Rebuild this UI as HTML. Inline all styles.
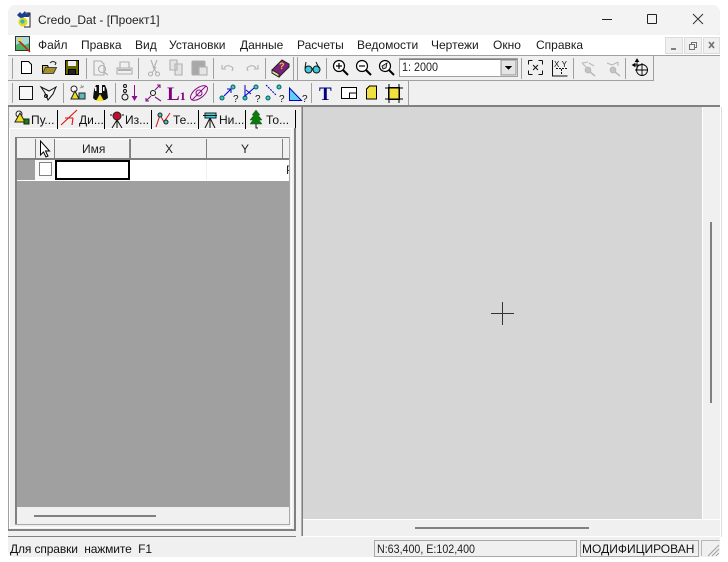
<!DOCTYPE html>
<html><head><meta charset="utf-8"><style>
*{box-sizing:border-box}
html,body{margin:0;padding:0;width:728px;height:562px;overflow:hidden;background:#fff}
svg{position:absolute;left:0;top:0}
text{font-family:"Liberation Sans",sans-serif;white-space:pre}
</style></head><body>
<svg width="728" height="562" viewBox="0 0 728 562" xmlns="http://www.w3.org/2000/svg" shape-rendering="crispEdges">
<!-- window -->
<rect x="8" y="5" width="712" height="552" rx="7" fill="#f0f0f0"/>
<rect x="8" y="5" width="712" height="30" rx="7" fill="#f3f3f3"/>
<rect x="8" y="35" width="712" height="20" fill="#fff"/>
<rect x="8" y="55" width="712" height="1" fill="#a0a0a0"/>
<!-- toolbars lines -->
<rect x="8" y="80" width="646" height="1" fill="#a0a0a0"/>
<rect x="408" y="81" width="1" height="24" fill="#a0a0a0"/>
<rect x="653" y="56" width="1" height="25" fill="#a0a0a0"/>
<rect x="8" y="105" width="712" height="2" fill="#808080"/>
<!-- separators -->
<g fill="#a0a0a0">
<rect x="12" y="58" width="1" height="21"/><rect x="86" y="58" width="1" height="21"/><rect x="138" y="58" width="1" height="21"/><rect x="213" y="58" width="1" height="21"/><rect x="265" y="58" width="1" height="21"/><rect x="293" y="57" width="1" height="23"/><rect x="297" y="57" width="1" height="23"/><rect x="326" y="58" width="1" height="21"/><rect x="521" y="58" width="1" height="21"/><rect x="573" y="58" width="1" height="21"/><rect x="625" y="58" width="1" height="21"/>
<rect x="12" y="83" width="1" height="20"/><rect x="63" y="83" width="1" height="20"/><rect x="115" y="83" width="1" height="20"/><rect x="213" y="83" width="1" height="20"/><rect x="311" y="83" width="1" height="20"/>
</g>
<!-- app icon -->
<g shape-rendering="auto">
<path d="M24 13h6v14h-6" fill="#fff" stroke="#222"/>
<path d="M17 15l3-3 2 2 3-3 1 3 4-1-1 4-5 0-2 2-3-2z" fill="#1c3f94"/>
<circle cx="23" cy="22" r="4.500" fill="#d8dc20"/>
<circle cx="22.500" cy="21.500" r="2" fill="#30b0c8"/>
</g>
<text x="38" y="24" font-size="12" fill="#222" shape-rendering="auto">Credo_Dat - [Проект1]</text>
<!-- window buttons -->
<rect x="602" y="19" width="10" height="1" fill="#222"/>
<rect x="647.5" y="14.5" width="9" height="9" rx="1" fill="none" stroke="#222"/>
<path d="M693 14l10 10M703 14l-10 10" stroke="#333" stroke-width="1" fill="none" shape-rendering="auto"/>
<!-- menu icon -->
<rect x="15.5" y="36.5" width="14" height="14" fill="#a8dcd8" stroke="#333"/>
<path d="M16 45l5-3 4 3 4-2v7H16z" fill="#50b060" shape-rendering="auto"/>
<path d="M18 40l12 12" stroke="#d01515" stroke-width="1.300" shape-rendering="auto"/>
<rect x="18" y="38" width="4" height="3" fill="#e0d850"/>
<!-- menu text -->
<g font-size="12" fill="#1a1a1a" shape-rendering="auto">
<text x="38" y="49">Файл</text><text x="81" y="49">Правка</text><text x="135" y="49">Вид</text><text x="169" y="49">Установки</text><text x="240" y="49">Данные</text><text x="297" y="49">Расчеты</text><text x="357" y="49">Ведомости</text><text x="431" y="49">Чертежи</text><text x="493" y="49">Окно</text><text x="536" y="49">Справка</text>
</g>
<!-- mdi buttons -->
<g fill="#f0f0f0" stroke="#dcdcdc"><rect x="665.5" y="37.5" width="17" height="16"/><rect x="684.5" y="37.5" width="17" height="16"/><rect x="703.5" y="37.5" width="16" height="16"/></g>
<rect x="671" y="48" width="5" height="2" fill="#808080"/>
<path d="M689.5 44.5h5v5h-5zM691.5 44.5v-2h5v5h-2" fill="none" stroke="#707070"/>
<path d="M709 42l5 6M714 42l-5 6" stroke="#707070" stroke-width="1.600" shape-rendering="auto"/>
<!-- row 1 icons -->
<g stroke="#000" fill="none" shape-rendering="auto">
<path d="M21.500 61.500h7l3 3v9h-10z" fill="#fff"/>
<path d="M42.500 73.500v-8h5l1 2h4v6z" fill="#d8c050"/><path d="M42.500 73.500l3-6h11l-3 6z" fill="#a89028" stroke="#444"/><path d="M50 63c2-2 4-2 6 0l-1 2" stroke="#222"/>
<rect x="65.500" y="60.500" width="13" height="14" fill="#666600"/><rect x="68" y="61" width="8" height="5" fill="#eee" stroke="none"/><rect x="68.500" y="69.500" width="7" height="5" fill="#222"/>
</g>
<g stroke="#b0b0b0" fill="none" stroke-width="1.100" shape-rendering="auto">
<path d="M94 61h7l3 3v11H94z"/><circle cx="102" cy="69" r="3.500"/><path d="M104 72l4 3"/>
<path d="M117 68h15v6h-15zM120 68v-6h9v6"/><path d="M118 70h13" stroke-width="2"/>
<path d="M151 60l3 8 3-8M152 73l4-6M157 73l-4-6"/><circle cx="150.500" cy="74" r="2"/><circle cx="157.500" cy="74" r="2"/>
<path d="M170 60h7v10h-7zM175 64h7v11h-7z" fill="#e4e4e4"/>
<rect x="192" y="61" width="13" height="14" rx="1" fill="#a8a8a8"/><rect x="199" y="67" width="8" height="8" fill="#e4e4e4"/>
<path d="M224 68c2-3 6-3 9 0l-1 3M222 65v4h4"/><path d="M256 68c-2-3-6-3-9 0l1 3M258 65v4h-4"/>
</g>
<!-- book -->
<path d="M272 70l10-10 7 4v3l-10 10-7-4z" fill="#7a1f7a" stroke="#222" shape-rendering="auto"/>
<path d="M272 70l7 4v3l-7-4z" fill="#e8e0a0" stroke="#222" shape-rendering="auto"/>
<text x="279" y="69" font-size="9" font-weight="bold" fill="#e8d020" shape-rendering="auto">?</text>
<!-- glasses -->
<g fill="#40c8d8" stroke="#111" shape-rendering="auto"><circle cx="308.500" cy="69.500" r="3.500"/><circle cx="316.500" cy="69.500" r="3.500"/><path d="M305 68l1-6M319 68l-3-6M312 69h1" fill="none"/></g>
<!-- zooms -->
<g fill="#fff" stroke="#000" stroke-width="1.200" shape-rendering="auto">
<circle cx="339" cy="66" r="5.500"/><path d="M336 66h6M339 63v6" fill="none"/><path d="M343 70l5 5" fill="none" stroke-width="2"/>
<circle cx="362" cy="66" r="5.500"/><path d="M359 66h6" fill="none"/><path d="M366 70l5 5" fill="none" stroke-width="2"/>
<circle cx="385" cy="66" r="5.500"/><path d="M382 66l5-3-1 5-3 1z" fill="#ccc" stroke-width=".8"/><path d="M389 70l5 5" fill="none" stroke-width="2"/>
</g>
<!-- combo -->
<rect x="399.500" y="58.500" width="118" height="18" fill="#fff" stroke="#a0a0a0"/>
<rect x="400" y="59" width="117" height="1" fill="#808080"/>
<text x="402" y="71" font-size="12" fill="#222" shape-rendering="auto" textLength="36" lengthAdjust="spacingAndGlyphs">1: 2000</text>
<rect x="501" y="60" width="15" height="15" fill="#e4e4e4" stroke="#909090"/>
<path d="M505 66h7l-3.500 4z" fill="#000"/>
<!-- row 1 right -->
<g stroke="#111" fill="none" shape-rendering="auto">
<path d="M528.500 60.500h4M528.500 60.500v4M542.500 60.500h-4M542.500 60.500v4M528.500 74.500h4M528.500 74.500v-4M542.500 74.500h-4M542.500 74.500v-4M533 65l5 5M538 65l-5 5"/>
<path d="M552.500 60v16h15"/><path d="M556 68.500h11M561.500 69v6" stroke-dasharray="2 1"/>
<text x="554" y="67" font-size="8" stroke="none" fill="#111" textLength="13">XY</text>
</g>
<g stroke="#b8b8b8" fill="none" stroke-width="1.100" shape-rendering="auto">
<path d="M582 63l6-1M582 63l4 4M594 66l-5-3"/><circle cx="588" cy="70" r="2.800" fill="#c4c4c4"/><path d="M590 72l5 4" stroke-width="1.500"/>
<path d="M607 63l5 2 6-3M618 62v4"/><circle cx="613" cy="70" r="2.800" fill="#c4c4c4"/><path d="M615 72l5 4" stroke-width="1.500"/>
</g>
<g stroke="#000" fill="none" stroke-width=".9" shape-rendering="auto">
<circle cx="642" cy="70" r="5.500"/><path d="M642 63v13M635 70h13M637 61v9M634 65h7"/><path d="M637 59l-1.500 2.500h3zM632.500 65l2.500-1.500v3z" fill="#000"/>
</g>
<!-- row 2 icons -->
<rect x="19.500" y="86.500" width="13" height="13" fill="#f8f8f8" stroke="#111"/>
<g stroke="#111" fill="none" shape-rendering="auto">
<path d="M41 87l8 4 7-4-3 7-5 6-3-7z" fill="#f4f4f4"/><circle cx="46" cy="96" r="1.500"/>
</g>
<g shape-rendering="auto">
<circle cx="74" cy="89" r="3" fill="#fff" stroke="#222"/><path d="M75 91l-4 8h8z" fill="#f0e020" stroke="#222"/><rect x="79" y="93" width="6" height="6" fill="#60b8b8" stroke="#222"/>
<path d="M81 85l2 3M84 86l-4 2" stroke="#999"/>
<path d="M93 98l1-8 2-5h3v8h3v-8h3l2 5 1 8-3 2h-3l-2-4-3 4h-2z" fill="#111"/><path d="M96 101l4-7 4 7z" fill="#f0e020"/><rect x="95" y="87" width="1.500" height="4" fill="#fff"/><rect x="103" y="87" width="1.500" height="4" fill="#fff"/>
</g>
<g stroke="#111" fill="none" shape-rendering="auto">
<circle cx="125" cy="86" r="1.500"/><circle cx="125" cy="91" r="1.500"/><circle cx="125" cy="97" r="3"/>
</g>
<path d="M134.500 85v11" stroke="#8a0e8a" fill="none" shape-rendering="auto"/><path d="M131.500 96h6l-3 5z" fill="#8a0e8a" shape-rendering="auto"/>
<g stroke="#8a0e8a" fill="none" stroke-width="1.100" shape-rendering="auto"><path d="M146 101l5-5M160 85l-5 5M157 85h3v3M146 98v3h3M155 97l6 4"/></g>
<circle cx="153" cy="93" r="2.500" fill="none" stroke="#111" shape-rendering="auto"/>
<text x="167" y="100" font-size="19" font-weight="bold" fill="#800080" style="font-family:'Liberation Serif',serif" shape-rendering="auto">L<tspan font-size="12">1</tspan></text>
<g fill="none" stroke="#8a0e8a" shape-rendering="auto"><ellipse cx="199" cy="93" rx="10" ry="5" transform="rotate(-38 199 93)"/><path d="M192 100l14-14"/><circle cx="199" cy="93" r="3"/></g>
<g shape-rendering="auto" fill="none" font-size="10">
<g stroke="#006060"><circle cx="222" cy="98" r="2" fill="#40c8c8"/><circle cx="233" cy="87" r="2" fill="#40c8c8"/><circle cx="245" cy="98" r="2" fill="#40c8c8"/><circle cx="256" cy="87" r="2" fill="#40c8c8"/><circle cx="268" cy="98" r="2" fill="#40c8c8"/><circle cx="279" cy="87" r="2" fill="#40c8c8"/></g>
<path d="M224 96l7-7M231 89h-4M231 89v4M245 85v11l9-8M246 90l5 4" stroke="#0000c8"/>
<path d="M266 85l10 10" stroke="#0000c8" stroke-dasharray="2 1"/>
<path d="M289.500 88v12.500h12z" fill="#60d0f0" stroke="#0000c8"/>
<g fill="#111" stroke="none"><text x="233" y="102">?</text><text x="255" y="102">?</text><text x="279" y="102">?</text><text x="302" y="102">?</text></g>
</g>
<text x="319" y="100" font-size="19" font-weight="bold" fill="#000080" style="font-family:'Liberation Serif',serif" shape-rendering="auto">T</text>
<rect x="341.500" y="87.500" width="15" height="11" fill="#fff" stroke="#000"/><path d="M349.500 98v-5h7" fill="none" stroke="#000"/>
<path d="M366.500 89l3-3h7v13h-10z" fill="#f0e040" stroke="#000"/>
<rect x="388.500" y="87.500" width="11" height="12" fill="#f0e040" stroke="#000"/><path d="M385 88h18M385 99h18M389 84v19M399 84v19" stroke="#000" fill="none"/>
<!-- left panel frames -->
<rect x="8" y="107" width="288" height="424" fill="#f0f0f0"/>
<rect x="8" y="107" width="1" height="424" fill="#a0a0a0"/>
<rect x="9" y="128" width="1" height="401" fill="#fff"/>
<rect x="10" y="128" width="283" height="1" fill="#fff"/>
<rect x="294" y="128" width="2" height="403" fill="#808080"/>
<rect x="291" y="129" width="1" height="398" fill="#fff"/>
<rect x="8" y="529" width="288" height="2" fill="#808080"/>
<rect x="10" y="527" width="282" height="1" fill="#fff"/>
<rect x="8" y="536" width="288" height="1" fill="#808080"/>
<!-- panel inner frame -->
<rect x="16" y="137" width="273" height="1" fill="#808080"/>
<rect x="15" y="137" width="2" height="388" fill="#808080"/>
<rect x="15" y="524" width="275" height="1" fill="#a8a8a8"/>
<rect x="289" y="137" width="1" height="388" fill="#a8a8a8"/>
<!-- tabs -->
<g fill="#000">
<rect x="57" y="110" width="1" height="19"/><rect x="104" y="110" width="1" height="19"/><rect x="151" y="110" width="1" height="19"/><rect x="198" y="110" width="1" height="19"/><rect x="245" y="110" width="1" height="19"/><rect x="295" y="110" width="1" height="18"/>
</g>
<!-- tab icons -->
<g shape-rendering="auto">
<circle cx="19" cy="114" r="3" fill="#fff" stroke="#222"/><path d="M20 113l-5 9h10z" fill="#f0e020" stroke="#222"/><rect x="24" y="119" width="5" height="5" fill="#108010" stroke="#222"/>
<path d="M61 125l16-15M65 118l8 0M73 118l-1 7" stroke="#e01010" fill="none" stroke-width="1.100"/>
<circle cx="117" cy="116" r="4" fill="#c01030" stroke="#222"/><path d="M117 120l-5 8M117 120v8M117 120l5 8M110 115h2M122 115h2" stroke="#111" fill="none"/>
<path d="M156 127l4-12 4 7 6-9" stroke="#d01010" fill="none"/><circle cx="160" cy="115" r="2" fill="#40c8c8" stroke="#222"/><circle cx="166" cy="122" r="2" fill="#40c8c8" stroke="#222"/>
<rect x="205" y="113" width="11" height="5" fill="#40d0e0" stroke="#222"/><path d="M203 115.500h14" stroke="#111" fill="none"/><path d="M210 118l-5 10M210 118v10M210 118l5 10" stroke="#111" fill="none"/>
<path d="M256 110l-4 5h2l-4 5h3l-3 4h12l-3-4h3l-4-5h2z" fill="#107810" stroke="#0c5c0c" stroke-width=".5"/><path d="M256 124v4h2" stroke="#111" fill="none"/>
</g>
<g font-size="12" fill="#111" shape-rendering="auto">
<text x="31" y="124">Пу...</text><text x="79" y="124">Ди...</text><text x="125" y="124">Из...</text><text x="173" y="124">Те...</text><text x="219" y="124">Ни...</text><text x="266" y="124">То...</text>
</g>
<!-- grid -->
<rect x="17" y="138" width="272" height="22" fill="#f0f0f0"/>
<rect x="17" y="160" width="272" height="21" fill="#fff"/>
<rect x="17" y="181" width="272" height="326" fill="#a0a0a0"/>
<rect x="17" y="507" width="272" height="17" fill="#f0f0f0"/>
<rect x="17" y="160" width="18" height="20" fill="#a0a0a0"/>
<rect x="35" y="160" width="20" height="20" fill="#fafafa"/>
<rect x="17" y="158" width="272" height="2" fill="#808080"/>
<g fill="#808080">
<rect x="35" y="139" width="1" height="20"/><rect x="54" y="139" width="1" height="20"/><rect x="130" y="139" width="1" height="20"/><rect x="206" y="139" width="1" height="20"/><rect x="282" y="139" width="1" height="20"/>
</g>
<rect x="55" y="139" width="75" height="19" fill="#f0f0f0"/>
<rect x="55" y="139" width="75" height="1" fill="#fff"/>
<rect x="129" y="139" width="1" height="19" fill="#888"/>
<rect x="206" y="160" width="1" height="20" fill="#f0f0f0"/>
<path d="M40.500 141v14l3-3 2.500 5 2-1-2.500-5h4z" fill="#fff" stroke="#000" shape-rendering="auto"/>
<rect x="39.500" y="162.500" width="12" height="13" fill="#fff" stroke="#808080"/>
<rect x="56" y="161" width="73" height="18" fill="#fff" stroke="#000" stroke-width="2"/>
<g font-size="12" fill="#222" shape-rendering="auto">
<text x="82" y="153">Имя</text><text x="165" y="153">X</text><text x="241" y="153">Y</text>
</g>
<svg x="284" y="160" width="5" height="20"><text x="2" y="14" font-size="12" fill="#222" shape-rendering="auto">Р</text></svg>
<rect x="34" y="515" width="122" height="2" fill="#808080"/>
<!-- right pane -->
<rect x="302" y="107" width="1" height="429" fill="#808080"/>
<rect x="301" y="107" width="1" height="429" fill="#b0b0b0"/>
<rect x="303" y="107" width="399" height="412" fill="#d6d6d6"/>
<rect x="703" y="107" width="17" height="412" fill="#f0f0f0"/>
<rect x="702" y="107" width="1" height="412" fill="#fff"/>
<rect x="303" y="520" width="417" height="17" fill="#f0f0f0"/>
<rect x="303" y="519" width="417" height="1" fill="#fff"/>
<rect x="720" y="107" width="1" height="430" fill="#fff"/>
<rect x="721" y="107" width="1" height="430" fill="#dcdcdc"/>
<rect x="710" y="222" width="2" height="181" fill="#808080"/>
<rect x="415" y="527" width="174" height="2" fill="#808080"/>
<rect x="303" y="536" width="417" height="1" fill="#fff"/>
<!-- crosshair -->
<rect x="491" y="313" width="23" height="1" fill="#333"/>
<rect x="502" y="302" width="1" height="23" fill="#333"/>
<!-- status bar -->
<text x="10" y="553" font-size="12" fill="#111" shape-rendering="auto" textLength="142">Для справки  нажмите  F1</text>
<rect x="374.500" y="540.500" width="202" height="16" fill="#f0f0f0" stroke="#a8a8a8"/>
<text x="377" y="553" font-size="12" fill="#222" shape-rendering="auto" textLength="98" lengthAdjust="spacingAndGlyphs">N:63,400, E:102,400</text>
<rect x="580.500" y="540.500" width="118" height="16" fill="#f0f0f0" stroke="#a8a8a8"/>
<text x="582" y="553" font-size="12" fill="#111" shape-rendering="auto">МОДИФИЦИРОВАН</text>
<path d="M701.500 556v-15.500h18" fill="none" stroke="#b8b8b8"/>
<path d="M708 556l11-11M712 556l7-7M716 556l3-3" stroke="#a0a0a0" shape-rendering="auto"/>
</svg>
</body></html>
